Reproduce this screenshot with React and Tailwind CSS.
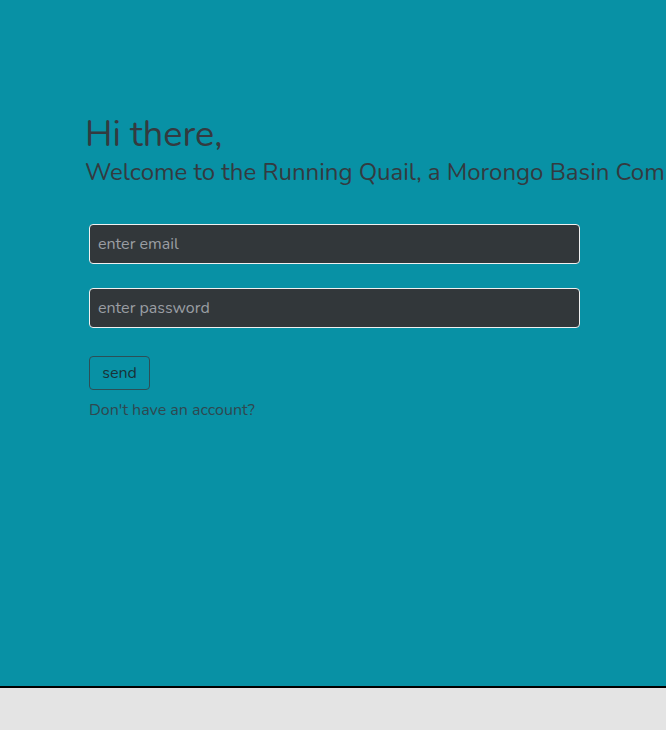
export default function App() {
  return (
    <div className="w-[666px] h-[730px] overflow-hidden bg-[#e4e4e4]" style={{ fontFamily: '"Nunito", "Lato", "Noto Sans", sans-serif' }}>
      <div className="h-[688px] bg-[#0891a5] border-b-2 border-black overflow-hidden">
        <div className="pt-[112px] pl-[85px]">
          <h1 className="text-[36px] leading-[46px] text-[#343a40] whitespace-nowrap">Hi there,</h1>
          <h2 className="text-[24px] leading-[28px] text-[#343a40] whitespace-nowrap">Welcome to the Running Quail, a Morongo Basin Community</h2>
          <form className="mt-[38px] pl-[4px] w-[495px] flex flex-col">
            <input
              placeholder="enter email"
              className="h-[40px] w-[491px] rounded-[4px] border border-[#f0f0f0] bg-[#32373a] px-[8px] text-[16px] text-white placeholder:text-[#9a9ea3] outline-none"
            />
            <input
              type="password"
              placeholder="enter password"
              className="mt-[24px] h-[40px] w-[491px] rounded-[4px] border border-[#f0f0f0] bg-[#32373a] px-[8px] text-[16px] text-white placeholder:text-[#9a9ea3] outline-none"
            />
            <button type="button" className="mt-[28px] self-start h-[34px] w-[61px] rounded-[4px] border border-[#2c4f57] text-[16px] text-[#1a3238]">send</button>
            <div className="mt-[8px] text-[16px] leading-[24px] text-[#2f4850]">Don't have an account?</div>
          </form>
        </div>
      </div>
    </div>
  );
}
